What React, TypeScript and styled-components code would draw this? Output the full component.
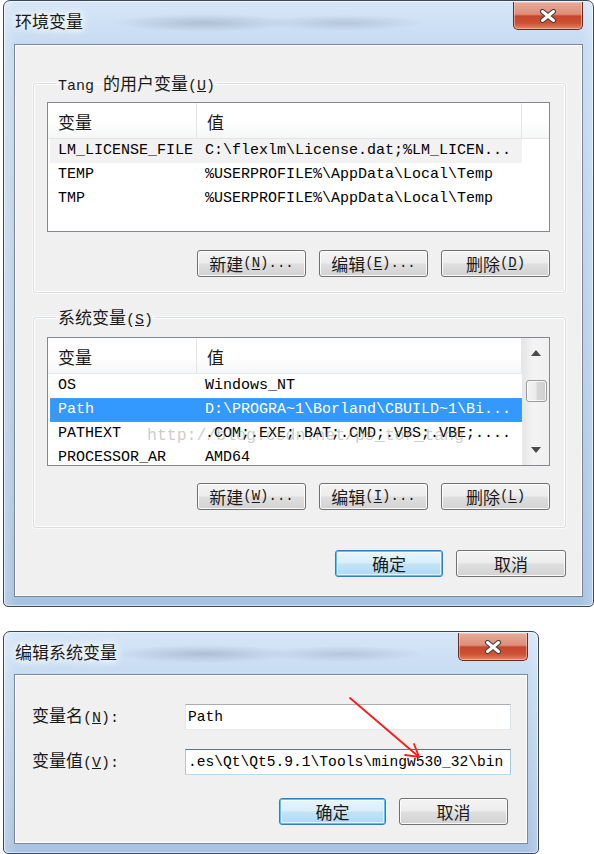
import React from 'react';
import styled, { createGlobalStyle } from 'styled-components';

const GlobalStyle = createGlobalStyle`
  html, body {
    margin: 0;
    padding: 0;
    background: #ffffff;
  }
  body {
    width: 594px;
    height: 854px;
    overflow: hidden;
    font-family: 'Noto Sans CJK SC', sans-serif;
  }
`;

const Page = styled.div`
  display: flex;
  flex-direction: column;
  align-items: flex-start;
  gap: 24px;
  padding-left: 3px;
`;

const Window = styled.div<{ $width: number }>`
  position: relative;
  width: ${(p) => p.$width}px;
  box-sizing: border-box;
  border: 1px solid #3b4656;
  border-radius: 7px 7px 5px 5px;
  padding: 0 10px 9px;
  background:
    linear-gradient(90deg, rgba(255, 255, 255, 0.25), rgba(255, 255, 255, 0) 12px, rgba(255, 255, 255, 0) calc(100% - 12px), rgba(255, 255, 255, 0.2)),
    linear-gradient(180deg, #d6e6f7 0px, #c6dbf2 44px, #b6cee9 60%, #a7c2e2 100%);
  box-shadow: inset 0 0 0 1px rgba(255, 255, 255, 0.55);
`;

const TitleBar = styled.div<{ $height: number }>`
  height: ${(p) => p.$height}px;
  display: flex;
  justify-content: space-between;
  align-items: flex-start;
  background:
    radial-gradient(ellipse 90px 9px at 190px 22px, rgba(95, 105, 125, 0.28), rgba(95, 105, 125, 0)),
    radial-gradient(ellipse 80px 8px at 330px 22px, rgba(95, 105, 125, 0.22), rgba(95, 105, 125, 0));
`;

const TitleText = styled.div`
  margin-left: 1px;
  height: 40px;
  line-height: 40px;
  font-family: 'Noto Sans CJK SC', sans-serif;
  font-size: 17px;
  color: #1a1a1a;
  text-shadow: 0 0 6px #ffffff, 0 0 10px #ffffff, 0 0 14px #ffffff;
`;

const CloseButton = styled.div`
  width: 70px;
  height: 28px;
  box-sizing: border-box;
  margin-top: 1px;
  border: 1px solid #6b2a1f;
  border-top: none;
  border-radius: 0 0 5px 5px;
  display: flex;
  align-items: center;
  justify-content: center;
  background: linear-gradient(180deg, #e9aa9a 0%, #dd8f79 45%, #c8452c 52%, #cc5234 78%, #e2856a 100%);
  box-shadow: inset 0 0 0 1px rgba(255, 220, 210, 0.5);
`;

const Content = styled.div<{ $pad: string }>`
  position: relative;
  background: #f0f0f0;
  border: 1px solid #7a8798;
  box-shadow: inset 0 0 0 1px #ffffff;
  padding: ${(p) => p.$pad};
  display: flex;
  flex-direction: column;
`;

const GroupBox = styled.fieldset<{ $top: number; $pt: number; $pb: number }>`
  margin: ${(p) => p.$top}px 0 0;
  padding: ${(p) => p.$pt}px 15px ${(p) => p.$pb}px 13px;
  min-inline-size: 0;
  border: 1px solid #d5dfe5;
  border-radius: 3px;
  box-shadow: inset 0 0 0 1px #ffffff, 0 0 0 1px rgba(255, 255, 255, 0.6);
  display: flex;
  flex-direction: column;
`;

const Legend = styled.legend`
  margin-left: 9px;
  padding: 0 2px;
  height: 20px;
  line-height: 20px;
  font-family: 'Noto Sans CJK SC', sans-serif;
  font-size: 17px;
  color: #1a1a1a;
`;

const Latin = styled.span`
  font-family: 'Liberation Mono', monospace;
  font-size: 15px;
`;

const ListBox = styled.div<{ $height: number }>`
  position: relative;
  height: ${(p) => p.$height}px;
  box-sizing: border-box;
  border: 1px solid #828790;
  background: #ffffff;
  display: flex;
  overflow: hidden;
`;

const ListMain = styled.div`
  flex: 1;
  display: flex;
  flex-direction: column;
`;

const Header = styled.div`
  height: 35px;
  flex-shrink: 0;
  display: flex;
  border-bottom: 1px solid #e3e5e8;
  background: linear-gradient(180deg, #ffffff 0%, #ffffff 55%, #f5f6f7 100%);
`;

const HeaderCell = styled.div<{ $width: number }>`
  width: ${(p) => p.$width}px;
  box-sizing: border-box;
  padding: 3px 0 0 10px;
  border-right: 1px solid #e5e5e5;
  line-height: 32px;
  font-family: 'Noto Sans CJK SC', sans-serif;
  font-size: 17px;
  color: #1a1a1a;
`;

const Row = styled.div<{ $state?: 'selected' | 'soft' }>`
  margin-left: 2px;
  width: 472px;
  height: 24px;
  flex-shrink: 0;
  box-sizing: border-box;
  display: grid;
  grid-template-columns: 147px 325px;
  font-family: 'Liberation Mono', monospace;
  font-size: 15px;
  line-height: 22px;
  white-space: nowrap;
  border: 1px ${(p) => (p.$state === 'selected' ? 'dotted #e8763c' : 'solid transparent')};
  background: ${(p) => (p.$state === 'selected' ? '#3399ff' : p.$state === 'soft' ? '#f2f2f2' : 'transparent')};
  color: ${(p) => (p.$state === 'selected' ? '#ffffff' : '#000000')};
`;

const Cell = styled.div`
  padding-left: 7px;
  overflow: hidden;
`;

const ScrollBar = styled.div`
  width: 26px;
  flex-shrink: 0;
  display: flex;
  flex-direction: column;
  align-items: center;
  background: linear-gradient(90deg, #e6e6e6 0%, #f4f4f4 40%, #f0f0f0 100%);
  border-left: 1px solid #e8e8e8;
`;

const ScrollArrow = styled.div`
  height: 30px;
  width: 100%;
  display: flex;
  align-items: center;
  justify-content: center;
`;

const ScrollThumb = styled.div`
  margin-top: 12px;
  width: 21px;
  height: 22px;
  box-sizing: border-box;
  border: 1px solid #9a9a9a;
  border-radius: 3px;
  background: linear-gradient(90deg, #f3f3f3 0%, #ebebeb 45%, #d6d6d6 55%, #cdcdcd 100%);
  box-shadow: inset 0 0 0 1px rgba(255, 255, 255, 0.8);
`;

const ScrollTrack = styled.div`
  flex: 1;
`;

const Watermark = styled.div`
  position: absolute;
  left: 99px;
  top: 88px;
  font-family: 'Liberation Mono', monospace;
  font-size: 16.5px;
  color: rgba(140, 140, 140, 0.45);
  pointer-events: none;
  white-space: nowrap;
`;

const ButtonRow = styled.div<{ $top: number; $gap?: number; $right?: number }>`
  margin-top: ${(p) => p.$top}px;
  margin-right: ${(p) => p.$right ?? 0}px;
  display: flex;
  justify-content: flex-end;
  gap: ${(p) => p.$gap ?? 13}px;
`;

const Button = styled.button<{ $width?: number; $primary?: boolean }>`
  width: ${(p) => p.$width ?? 109}px;
  height: 27px;
  box-sizing: border-box;
  padding: 0;
  border: 1px solid ${(p) => (p.$primary ? '#2f7fc0' : '#707070')};
  border-radius: 3px;
  background: ${(p) =>
    p.$primary
      ? 'linear-gradient(180deg, #e8f5fd 0%, #d8eefb 48%, #c2e3f6 52%, #b1d9f1 100%)'
      : 'linear-gradient(180deg, #f4f4f4 0%, #ececec 48%, #dfdfdf 52%, #d2d2d2 100%)'};
  box-shadow: ${(p) =>
    p.$primary
      ? 'inset 0 0 0 1px #5cc0f3, inset 0 0 0 2px rgba(255,255,255,0.6)'
      : 'inset 0 0 0 1px rgba(255,255,255,0.85)'};
  font-family: 'Noto Sans CJK SC', sans-serif;
  font-size: 17px;
  line-height: 25px;
  color: #1a1a1a;
  display: flex;
  align-items: center;
  justify-content: center;
`;

const Mnemonic = styled.span`
  font-family: 'Liberation Mono', monospace;
  font-size: 14px;
  color: #1a1a1a;

  u {
    text-underline-offset: 2px;
  }
`;

const FormGrid = styled.div`
  display: grid;
  grid-template-columns: 153px 326px;
  row-gap: 15px;
  align-items: center;
`;

const FieldLabel = styled.div`
  font-family: 'Noto Sans CJK SC', sans-serif;
  font-size: 17px;
  color: #1a1a1a;
  line-height: 26px;
`;

const TextField = styled.div<{ $focused?: boolean }>`
  height: 26px;
  box-sizing: border-box;
  padding: 0 1px 0 2px;
  border: 1px solid;
  border-color: ${(p) => (p.$focused ? '#3d7bad #a4c9e3 #b7d9ed #a4c9e3' : '#abadb3 #dbdfe6 #e3e9ef #e2e3ea')};
  background: #ffffff;
  font-family: 'Liberation Mono', monospace;
  font-size: 14.6px;
  line-height: 24px;
  color: #000000;
  white-space: nowrap;
  overflow: hidden;
`;

const ArrowOverlay = styled.svg`
  position: absolute;
  left: 0;
  top: 0;
  pointer-events: none;
`;

const CloseGlyph = () => (
  <svg width="18" height="14" viewBox="0 0 18 14">
    <path d="M3.5 2.5 L14.5 11.5 M14.5 2.5 L3.5 11.5" stroke="#3e3e3e" strokeWidth="5" strokeLinecap="round" />
    <path d="M3.5 2.5 L14.5 11.5 M14.5 2.5 L3.5 11.5" stroke="#ffffff" strokeWidth="3" strokeLinecap="round" />
  </svg>
);

const ArrowGlyph = ({ down }: { down?: boolean }) => (
  <svg width="10" height="6" viewBox="0 0 10 6">
    <polygon points={down ? '0,0 10,0 5,6' : '0,6 10,6 5,0'} fill="#4a4a4a" />
  </svg>
);

type Item = { name: string; value: string; state?: 'selected' | 'soft' };

const userVars: Item[] = [
  { name: 'LM_LICENSE_FILE', value: 'C:\\flexlm\\License.dat;%LM_LICEN...', state: 'soft' },
  { name: 'TEMP', value: '%USERPROFILE%\\AppData\\Local\\Temp' },
  { name: 'TMP', value: '%USERPROFILE%\\AppData\\Local\\Temp' },
];

const sysVars: Item[] = [
  { name: 'OS', value: 'Windows_NT' },
  { name: 'Path', value: 'D:\\PROGRA~1\\Borland\\CBUILD~1\\Bi...', state: 'selected' },
  { name: 'PATHEXT', value: '.COM;.EXE;.BAT;.CMD;.VBS;.VBE;....' },
  { name: 'PROCESSOR_AR', value: 'AMD64' },
];

const VarList = ({ items, height, scroll }: { items: Item[]; height: number; scroll?: boolean }) => (
  <ListBox $height={height}>
    <ListMain>
      <Header>
        <HeaderCell $width={149}>变量</HeaderCell>
        <HeaderCell $width={325}>值</HeaderCell>
      </Header>
      {items.map((it) => (
        <Row key={it.name} $state={it.state}>
          <Cell>{it.name}</Cell>
          <Cell>{it.value}</Cell>
        </Row>
      ))}
    </ListMain>
    {scroll && (
      <ScrollBar>
        <ScrollArrow>
          <ArrowGlyph />
        </ScrollArrow>
        <ScrollThumb />
        <ScrollTrack />
        <ScrollArrow>
          <ArrowGlyph down />
        </ScrollArrow>
      </ScrollBar>
    )}
    {scroll && <Watermark>http://blog.csdn.net/ps_tor_tang</Watermark>}
  </ListBox>
);

const Btn = ({ label, mn, dots, width, primary }: { label: string; mn?: string; dots?: boolean; width?: number; primary?: boolean }) => (
  <Button $width={width} $primary={primary}>
    {label}
    {mn && (
      <Mnemonic>
        (<u>{mn}</u>){dots ? '...' : ''}
      </Mnemonic>
    )}
  </Button>
);

const App: React.FC = () => {
  return (
    <>
      <GlobalStyle />
      <Page>
        <Window $width={591}>
          <TitleBar $height={43}>
            <TitleText>环境变量</TitleText>
            <CloseButton>
              <CloseGlyph />
            </CloseButton>
          </TitleBar>
          <Content $pad="0 16px 19px 18px">
            <GroupBox $top={28} $pt={9} $pb={15}>
              <Legend>
                <Latin>Tang </Latin>的用户变量<Latin>(<u>U</u>)</Latin>
              </Legend>
              <VarList items={userVars} height={130} />
              <ButtonRow $top={18}>
                <Btn label="新建" mn="N" dots />
                <Btn label="编辑" mn="E" dots />
                <Btn label="删除" mn="D" />
              </ButtonRow>
            </GroupBox>
            <GroupBox $top={14} $pt={10} $pb={17}>
              <Legend>
                系统变量<Latin>(<u>S</u>)</Latin>
              </Legend>
              <VarList items={sysVars} height={129} scroll />
              <ButtonRow $top={17}>
                <Btn label="新建" mn="W" dots />
                <Btn label="编辑" mn="I" dots />
                <Btn label="删除" mn="L" />
              </ButtonRow>
            </GroupBox>
            <ButtonRow $top={22}>
              <Btn label="确定" width={108} primary />
              <Btn label="取消" width={110} />
            </ButtonRow>
          </Content>
        </Window>

        <Window $width={536}>
          <TitleBar $height={42}>
            <TitleText>编辑系统变量</TitleText>
            <CloseButton>
              <CloseGlyph />
            </CloseButton>
          </TitleBar>
          <Content $pad="27px 16px 18px 17px">
            <FormGrid>
              <FieldLabel>
                变量名<Latin>(<u>N</u>):</Latin>
              </FieldLabel>
              <TextField>Path</TextField>
              <FieldLabel>
                变量值<Latin>(<u>V</u>):</Latin>
              </FieldLabel>
              <TextField $focused>.es\Qt\Qt5.9.1\Tools\mingw530_32\bin</TextField>
            </FormGrid>
            <ButtonRow $top={21} $right={3}>
              <Btn label="确定" width={107} primary />
              <Btn label="取消" width={109} />
            </ButtonRow>
          </Content>
          <ArrowOverlay width="536" height="217" viewBox="0 0 536 217">
            <g stroke="#ff1a1a" strokeWidth="1.8" fill="none" strokeLinecap="round">
              <line x1="346" y1="66" x2="415" y2="125" />
              <polyline points="401,123 415,125 410,112" />
            </g>
          </ArrowOverlay>
        </Window>
      </Page>
    </>
  );
};

export default App;
